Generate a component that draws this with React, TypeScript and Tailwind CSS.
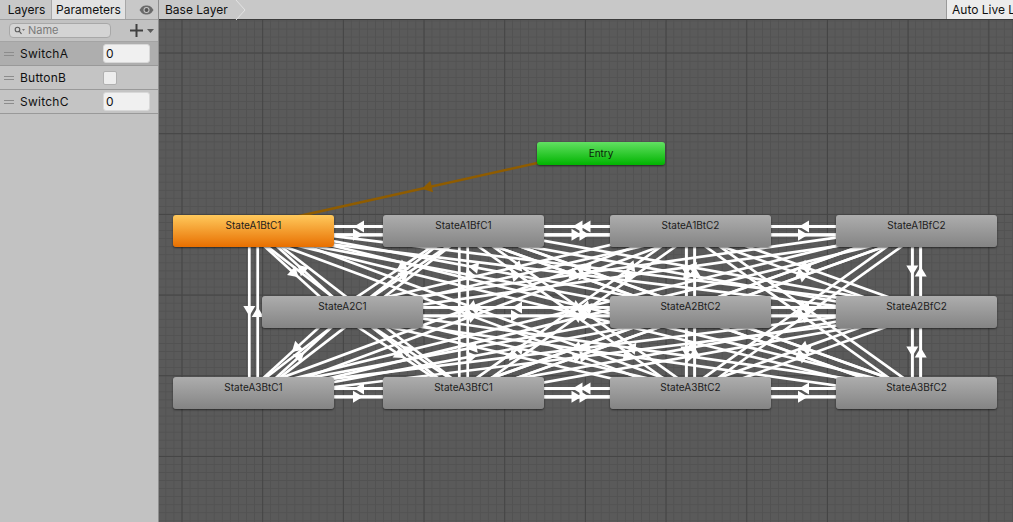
import { Fragment } from "react";

/* Animator window: parameters panel on the left, state graph on the right */

const FONT = "font-['Inter','Liberation_Sans',sans-serif]";

interface StateNode {
  name: string;
  x: number;
  y: number;
}

// positions are relative to the graph canvas
const STATES: StateNode[] = [
  { name: "StateA1BtC1", x: 14, y: 195 },
  { name: "StateA1BfC1", x: 224, y: 195 },
  { name: "StateA1BtC2", x: 451, y: 195 },
  { name: "StateA1BfC2", x: 677, y: 195 },
  { name: "StateA2C1", x: 103, y: 276 },
  { name: "StateA2BtC2", x: 451, y: 276 },
  { name: "StateA2BfC2", x: 677, y: 276 },
  { name: "StateA3BtC1", x: 14, y: 357 },
  { name: "StateA3BfC1", x: 224, y: 357 },
  { name: "StateA3BtC2", x: 451, y: 357 },
  { name: "StateA3BfC2", x: 677, y: 357 },
];

const NODE_W = 161;
const NODE_H = 32;
const LINE_OFFSET = 4.2;

type Pt = { x: number; y: number };

const center = (s: StateNode): Pt => ({ x: s.x + NODE_W / 2, y: s.y + NODE_H / 2 - 0.4 });

function Transition({ from, to, color, width }: { from: Pt; to: Pt; color: string; width: number }) {
  const dx = to.x - from.x;
  const dy = to.y - from.y;
  const len = Math.hypot(dx, dy);
  const ux = dx / len;
  const uy = dy / len;
  const ox = -uy * LINE_OFFSET;
  const oy = ux * LINE_OFFSET;
  const mx = (from.x + to.x) / 2 + ox;
  const my = (from.y + to.y) / 2 + oy;
  const tip = `${mx + ux * 4.5},${my + uy * 4.5}`;
  const a = `${mx - ux * 5.5 - uy * 6},${my - uy * 5.5 + ux * 6}`;
  const b = `${mx - ux * 5.5 + uy * 6},${my - uy * 5.5 - ux * 6}`;
  return (
    <g>
      <line x1={from.x + ox} y1={from.y + oy} x2={to.x + ox} y2={to.y + oy} stroke={color} strokeWidth={width} />
      <polygon points={`${tip} ${a} ${b}`} fill={color} />
    </g>
  );
}

function Handle() {
  return (
    <div className="flex w-[10px] flex-col gap-[2px]">
      <div className="h-px bg-[#8c8c8c]" />
      <div className="h-px bg-[#8c8c8c]" />
    </div>
  );
}

function ParamRow({ name, selected, kind }: { name: string; selected?: boolean; kind: "int" | "bool" }) {
  return (
    <div
      className={`flex h-[24px] items-center border-b border-[#999999] pl-1 ${selected ? "bg-[#aeaeae]" : "bg-[#c4c4c4]"}`}
    >
      <Handle />
      <span className="ml-[6px] w-[83px] text-[12px] leading-none tracking-[0.02em] text-[#101010]">{name}</span>
      {kind === "int" ? (
        <div className="flex h-[19px] w-[47px] items-center rounded-[3px] border border-[#d8d8d8] bg-[#f0f0f0] pl-[2px] text-[12px] text-[#101010]">
          0
        </div>
      ) : (
        <div className="h-[14px] w-[14px] rounded-[2px] border border-[#b0b0b0] bg-[#ededed]" />
      )}
    </div>
  );
}

function EyeIcon() {
  return (
    <svg width="15" height="10" viewBox="0 0 15 10">
      <path d="M0.5 5 C3 1 5 0.5 7.5 0.5 C10 0.5 12 1 14.5 5 C12 9 10 9.5 7.5 9.5 C5 9.5 3 9 0.5 5 Z" fill="#6a6a6a" />
      <circle cx="7.5" cy="5" r="3" fill="#c9c9c9" />
      <circle cx="7.5" cy="5" r="2" fill="#555555" />
    </svg>
  );
}

function SearchIcon() {
  return (
    <svg width="11" height="9" viewBox="0 0 11 9" fill="none">
      <circle cx="3.5" cy="3.5" r="2.3" stroke="#5c5c5c" strokeWidth="1.1" />
      <path d="M5.2 5.2 L7.5 7.8" stroke="#5c5c5c" strokeWidth="1.2" />
      <path d="M8 3 L11 3 L9.5 5 Z" fill="#7a7a7a" />
    </svg>
  );
}

function StateBox({ node, active }: { node: StateNode; active?: boolean }) {
  return (
    <div
      className={`absolute h-[32px] w-[161px] rounded-[3px] pt-[4px] text-center text-[10px] leading-[13px] text-[#1c1c1c] shadow-[0_1px_2px_rgba(0,0,0,0.55)] ${
        active
          ? "bg-[linear-gradient(#ffc95c,#e86f00)]"
          : "bg-[linear-gradient(#adadad,#848484)]"
      }`}
      style={{ left: node.x, top: node.y }}
    >
      {node.name}
    </div>
  );
}

export default function App() {
  const entryPos: StateNode = { name: "Entry", x: 378, y: 122 };
  const entryCenter: Pt = { x: 442, y: 133 };

  return (
    <div className={`flex h-screen w-screen overflow-hidden bg-[#c2c2c2] ${FONT}`}>
      {/* left panel */}
      <aside className="flex w-[159px] shrink-0 flex-col border-r border-[#8e8e8e] bg-[#c2c2c2]">
        <div className="flex h-[20px] items-stretch border-b border-[#a0a0a0] bg-[#c8c8c8] text-[12px] text-[#101010]">
          <div className="flex w-[52px] items-center justify-center border-r border-[#a8a8a8] pl-[2px]">Layers</div>
          <div className="flex w-[74px] items-center justify-center border-r border-[#a8a8a8] bg-[#e2e2e2]">Parameters</div>
          <div className="flex flex-1 items-center justify-end pr-[4px]">
            <EyeIcon />
          </div>
        </div>
        <div className="flex h-[22px] items-center border-b border-[#a4a4a4] pl-[9px]">
          <div className="flex h-[15px] w-[102px] items-center gap-[3px] rounded-[4px] border border-[#a8a8a8] bg-[#d4d4d4] pl-[4px] text-[11px] leading-none text-[#7a7a7a]">
            <SearchIcon />
            <span>Name</span>
          </div>
          <svg className="ml-[19px]" width="13" height="13" viewBox="0 0 13 13">
            <path d="M0 5.5 H13 V7.5 H0 Z M5.5 0 H7.5 V13 H5.5 Z" fill="#404040" />
          </svg>
          <svg className="ml-[4px]" width="7" height="4" viewBox="0 0 7 4">
            <path d="M0 0 H7 L3.5 4 Z" fill="#5a5a5a" />
          </svg>
        </div>
        <ParamRow name="SwitchA" kind="int" selected />
        <ParamRow name="ButtonB" kind="bool" />
        <ParamRow name="SwitchC" kind="int" />
      </aside>

      {/* graph */}
      <main className="flex min-w-0 flex-1 flex-col">
        <div className="flex h-[20px] shrink-0 items-stretch border-b border-[#3c3c3c] bg-[#c8c8c8] text-[12px] text-[#101010]">
          <div className="flex items-center pl-[6px]">Base Layer</div>
          <svg className="ml-[7px]" width="12" height="20" viewBox="0 0 12 20" fill="none">
            <path d="M1 0 L10 10 L1 20" stroke="#e2e2e2" strokeWidth="1" />
          </svg>
          <div className="ml-auto flex w-[67px] items-center overflow-hidden whitespace-nowrap border-l border-[#9a9a9a] bg-[#ececec] pl-[5px]">
            Auto Live Link
          </div>
        </div>

        <div className="relative flex-1 overflow-hidden bg-[#5a5a5a] bg-[linear-gradient(to_right,#454545_1px,transparent_1px),linear-gradient(to_bottom,#454545_1px,transparent_1px),linear-gradient(to_right,#525252_1px,transparent_1px),linear-gradient(to_bottom,#525252_1px,transparent_1px)] bg-[size:80.7px_80.7px,80.7px_80.7px,8.07px_8.07px,8.07px_8.07px] bg-[position:22.5px_32.5px,22.5px_32.5px,6.4px_0.5px,6.4px_0.5px]">
          <svg className="absolute inset-0 h-full w-full">
            {STATES.map((a, i) => (
              <Fragment key={a.name}>
                {STATES.map((b, j) =>
                  i === j ? null : (
                    <Transition key={b.name} from={center(a)} to={center(b)} color="#ffffff" width={2.7} />
                  ),
                )}
              </Fragment>
            ))}
            <Transition from={entryCenter} to={center(STATES[0])} color="#8f5c00" width={2.6} />
          </svg>

          <div
            className="absolute h-[23px] w-[128px] rounded-[3px] bg-[linear-gradient(#62e062,#00b400)] pt-[5px] text-center text-[10px] leading-[13px] text-[#0a1c0a] shadow-[0_1px_2px_rgba(0,0,0,0.55)]"
            style={{ left: entryPos.x, top: entryPos.y }}
          >
            {entryPos.name}
          </div>
          {STATES.map((s, i) => (
            <StateBox key={s.name} node={s} active={i === 0} />
          ))}
        </div>
      </main>
    </div>
  );
}
